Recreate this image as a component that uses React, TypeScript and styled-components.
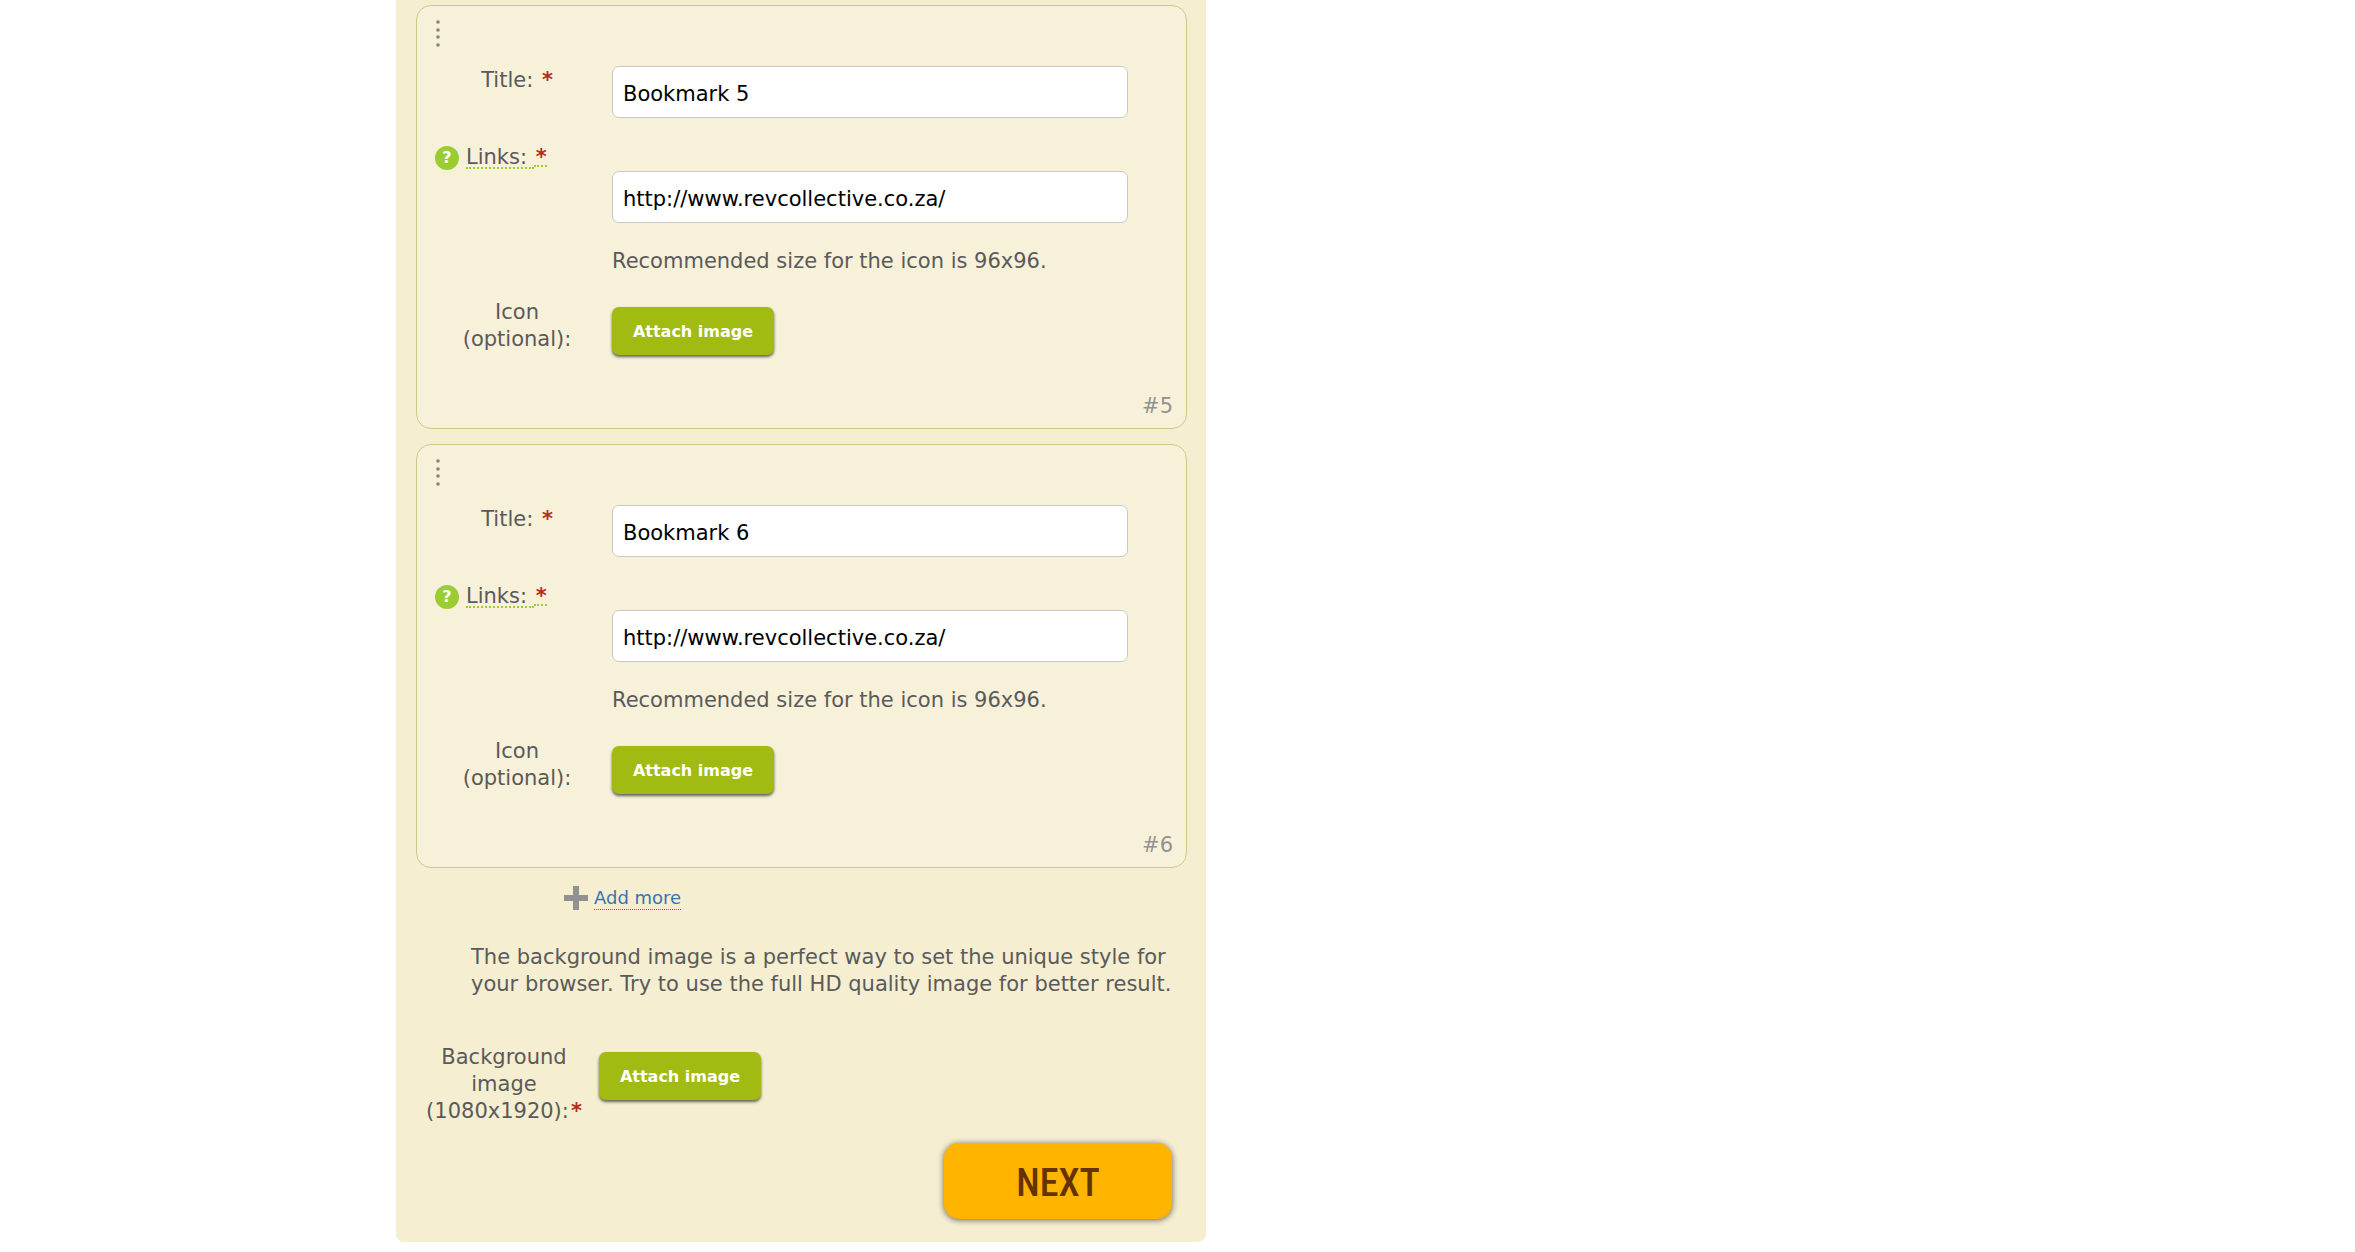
import React from "react";
import styled, { createGlobalStyle } from "styled-components";

const GlobalStyle = createGlobalStyle`
  *, *::before, *::after { box-sizing: border-box; }
  body {
    margin: 0;
    background: #fff;
    color: #5a5a5a;
    font: 21px/27px Verdana, "DejaVu Sans", sans-serif;
  }
  button, input { font-family: inherit; }
`;

const Page = styled.main`
  padding-left: 396px;
`;

const Panel = styled.form`
  max-width: 810px;
  padding: 5px 19px 23px 20px;
  border-radius: 0 0 8px 8px;
  background: #f5eed0;
`;

const CardList = styled.div`
  display: flex;
  flex-direction: column;
  gap: 15px;
`;

const Card = styled.fieldset`
  margin: 0;
  min-width: 0;
  padding: 0 13px 8px 18px;
  border: 1px solid #c5cd89;
  border-radius: 15px;
  background: #f7f1da;
`;

const Handle = styled.div`
  height: 60px;
  padding-top: 14px;

  svg { display: block; }
`;

const Row = styled.div<{ $top?: number }>`
  display: grid;
  grid-template-columns: 164px 1fr;
  column-gap: 13px;
  padding: ${(p) => p.$top ?? 0}px 45px 0 0;
`;

const FieldLabel = styled.label`
  padding-top: 1px;
  text-align: center;
`;

const HelpLabel = styled.label`
  grid-column: 1 / -1;
  display: flex;
  align-items: center;
  gap: 7px;
`;

const HelpMark = styled.span`
  width: 24px;
  height: 24px;
  border-radius: 50%;
  background: #9acd32;
  color: #fff;
  font-size: 16px;
  font-weight: bold;
  line-height: 24px;
  text-align: center;
`;

const Hinted = styled.span`
  display: inline-block;
  border-bottom: 2px dotted #9acd32;
  line-height: 20px;
  white-space: pre;
`;

const Star = styled.span<{ $hinted?: boolean }>`
  padding-left: 2px;
  color: #b92c1c;
  font-size: 21px;
  font-weight: bold;
  ${(p) =>
    p.$hinted &&
    `
    display: inline-block;
    border-bottom: 2px dotted #9acd32;
    line-height: 16px;
  `}
`;

const TextField = styled.input`
  grid-column: 2;
  width: 100%;
  height: 52px;
  padding: 3px 10px 0;
  border: 1px solid #c8c8c8;
  border-radius: 7px;
  background: #fff;
  color: #000;
  font-size: 21px;
`;

const SizeHint = styled.p`
  grid-column: 2;
  margin: 0;
`;

const AttachButton = styled.button`
  justify-self: start;
  width: 162px;
  height: 48px;
  margin-top: 9px;
  padding: 0;
  border: 0;
  border-radius: 7px;
  background: #a2bb13;
  box-shadow: 0 2px 3px rgba(0, 0, 0, 0.6);
  color: #fff;
  font-size: 16px;
  font-weight: bold;
`;

const CardNumber = styled.div`
  margin-top: 38px;
  color: #929292;
  text-align: right;
`;

const AddMore = styled.div`
  display: flex;
  align-items: center;
  gap: 6px;
  padding: 18px 0 0 148px;

  svg { display: block; }
`;

const AddLink = styled.a`
  border-bottom: 1px dotted #3b73af;
  color: #3b73af;
  font-size: 18px;
  line-height: 22px;
  text-decoration: none;
`;

const Note = styled.p`
  margin: 34px 0 0;
  padding-left: 55px;
`;

const BackgroundRow = styled.div`
  display: grid;
  grid-template-columns: 176px 1fr;
  column-gap: 7px;
  padding-top: 45px;
`;

const Actions = styled.div`
  display: flex;
  justify-content: flex-end;
  padding: 18px 15px 0 0;
`;

const NextButton = styled.button`
  width: 228px;
  height: 76px;
  padding: 4px 0 0;
  border: 0;
  border-radius: 15px;
  background: #ffb400;
  box-shadow: 0 1px 6px rgba(0, 0, 0, 0.6);
  color: #663300;
  && { font-family: "Liberation Sans Narrow", "Roboto Condensed", "Open Sans Condensed", Roboto, sans-serif; }
  font-size: 38px;
  font-weight: 500;
`;

const bookmarks = [
  { id: 5, title: "Bookmark 5", link: "http://www.revcollective.co.za/" },
  { id: 6, title: "Bookmark 6", link: "http://www.revcollective.co.za/" },
];

function BookmarkCard({ id, title, link }: (typeof bookmarks)[number]) {
  return (
    <Card>
      <Handle>
        <svg width="6" height="28" viewBox="0 0 6 28" fill="#858579" aria-hidden="true">
          {[2, 10, 17, 25].map((y) => (
            <circle key={y} cx="3" cy={y} r="1.8" />
          ))}
        </svg>
      </Handle>
      <Row>
        <FieldLabel htmlFor={`title-${id}`}>
          Title: <Star>*</Star>
        </FieldLabel>
        <TextField id={`title-${id}`} defaultValue={title} />
      </Row>
      <Row $top={26}>
        <HelpLabel htmlFor={`link-${id}`}>
          <HelpMark>?</HelpMark>
          <span>
            <Hinted>{"Links: "}</Hinted>
            <Star $hinted>*</Star>
          </span>
        </HelpLabel>
        <TextField id={`link-${id}`} defaultValue={link} />
      </Row>
      <Row $top={25}>
        <SizeHint>Recommended size for the icon is 96x96.</SizeHint>
      </Row>
      <Row $top={23}>
        <FieldLabel htmlFor={`icon-${id}`}>
          Icon
          <br />
          (optional):
        </FieldLabel>
        <AttachButton type="button" id={`icon-${id}`}>
          Attach image
        </AttachButton>
      </Row>
      <CardNumber>#{id}</CardNumber>
    </Card>
  );
}

export default function App() {
  return (
    <>
      <GlobalStyle />
      <Page>
        <Panel onSubmit={(e) => e.preventDefault()}>
          <CardList>
            {bookmarks.map((b) => (
              <BookmarkCard key={b.id} {...b} />
            ))}
          </CardList>
          <AddMore>
            <svg width="24" height="24" viewBox="0 0 24 24" fill="#929292" aria-hidden="true">
              <path d="M9 0h6v9h9v6h-9v9H9v-9H0V9h9z" />
            </svg>
            <AddLink href="#add">Add more</AddLink>
          </AddMore>
          <Note>
            The background image is a perfect way to set the unique style for your browser. Try to use the full HD
            quality image for better result.
          </Note>
          <BackgroundRow>
            <FieldLabel htmlFor="background">
              Background image (1080x1920):<Star>*</Star>
            </FieldLabel>
            <AttachButton type="button" id="background">
              Attach image
            </AttachButton>
          </BackgroundRow>
          <Actions>
            <NextButton type="submit">NEXT</NextButton>
          </Actions>
        </Panel>
      </Page>
    </>
  );
}
